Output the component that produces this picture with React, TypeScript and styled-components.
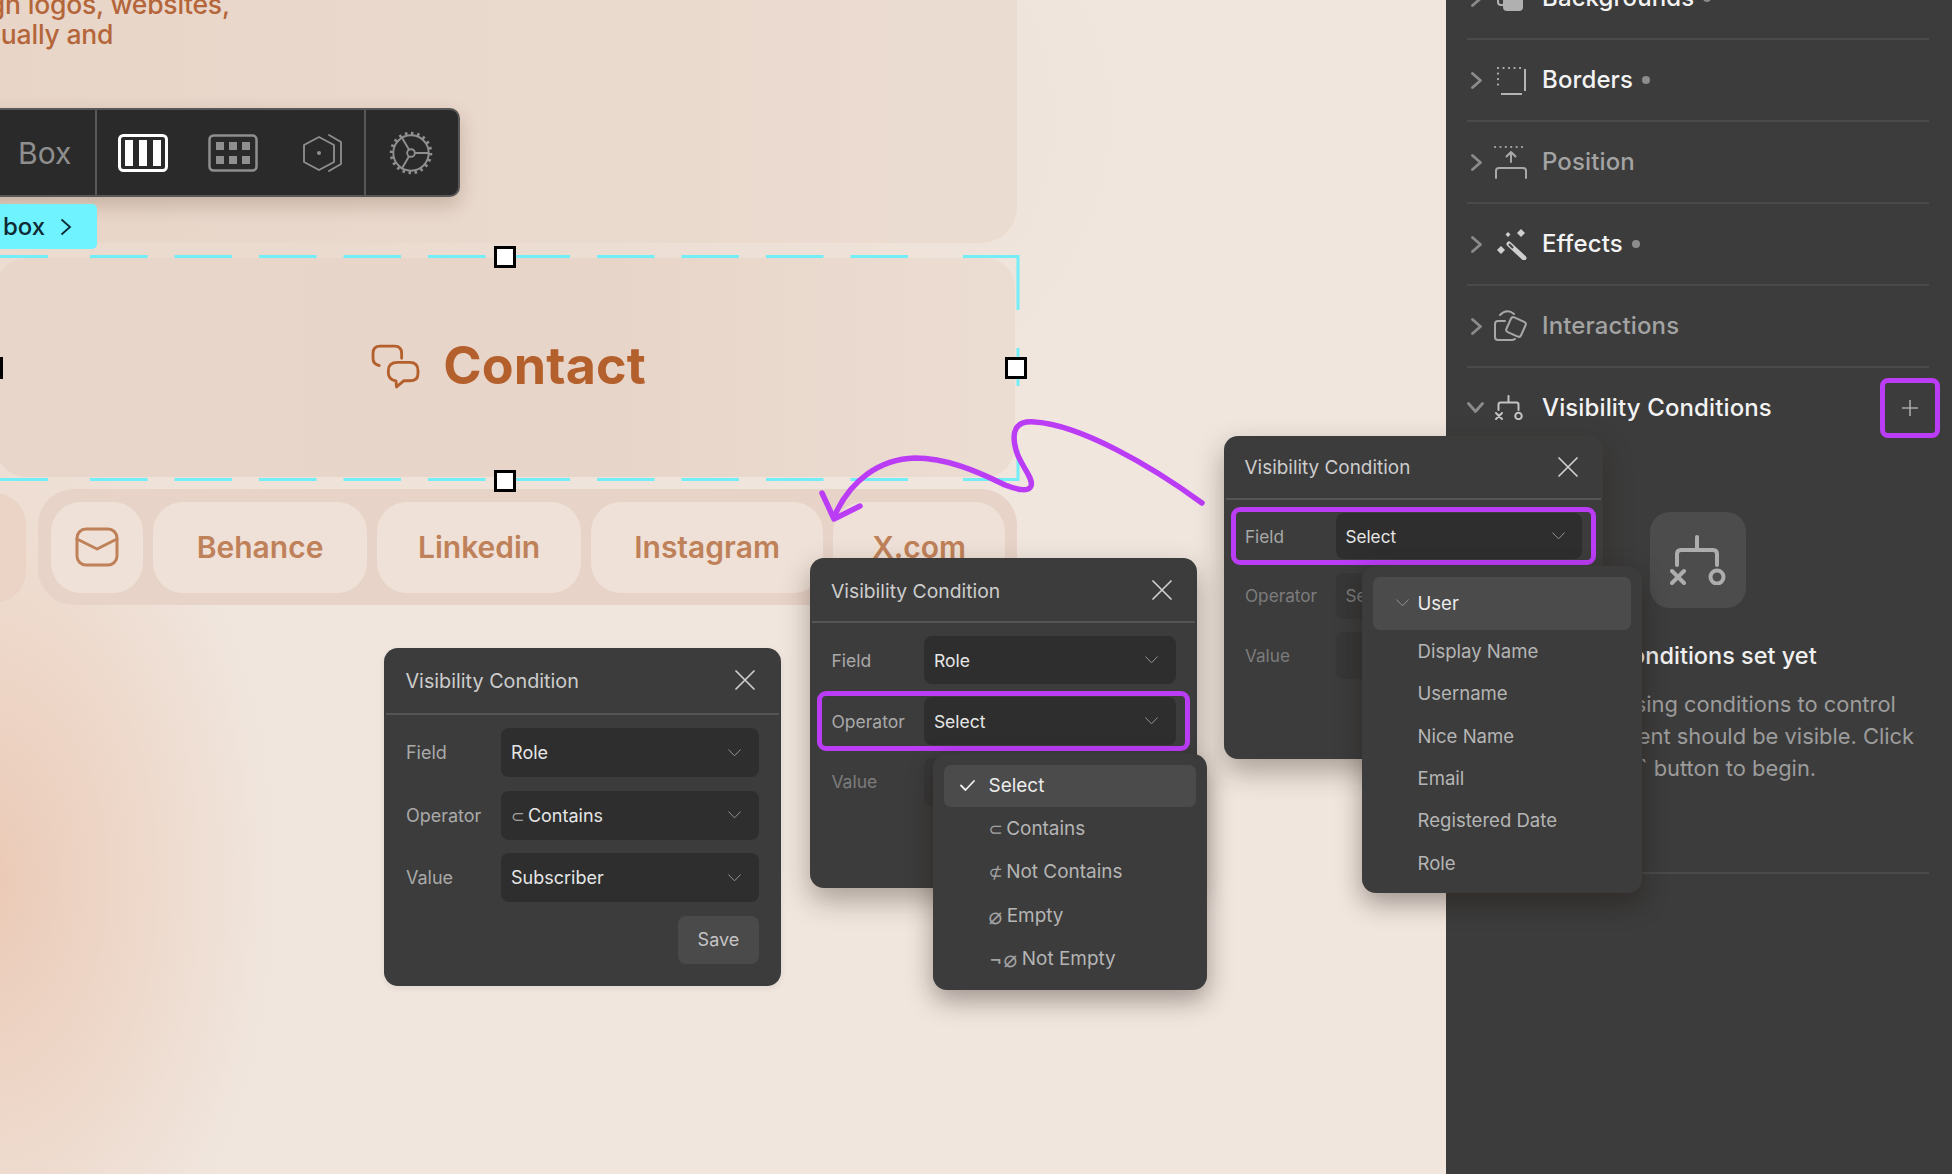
import React from "react";
import styled, { createGlobalStyle } from "styled-components";

const UI_FONT = `"Inter", "DejaVu Sans", sans-serif`;
const PURPLE = "#bb3cf5";
const CYAN = "#74eef6";

const GlobalStyle = createGlobalStyle`
  html, body {
    margin: 0;
    padding: 0;
    background: #f0e5dd;
    font-family: ${UI_FONT};
    overflow: hidden;
  }
`;

const Page = styled.div`
  position: relative;
  display: flex;
  width: 1952px;
  height: 1174px;
  overflow: hidden;
`;

/* canvas */
const Canvas = styled.main`
  flex: 1;
  height: 100%;
  position: relative;
  overflow: hidden;
  background:
    radial-gradient(ellipse 300px 480px at -20px 880px, #ebc9b5 0%, rgba(236, 205, 186, 0) 100%),
    radial-gradient(ellipse 900px 480px at 240px 120px, #e9d6c9 0%, rgba(233, 214, 201, 0) 100%),
    #f0e6de;
`;

const Stage = styled.div`
  display: flex;
  flex-direction: column;
  width: 1021px;
  margin-left: -4px;
`;

const TopCard = styled.section`
  height: 283px;
  margin: -40px 0 0 -40px;
  padding-top: 29px;
  box-sizing: border-box;
  border-radius: 0 0 36px 0;
  background: linear-gradient(90deg, #e8d5c8, #ebdcd1);
`;

const Intro = styled.p`
  margin: 0 0 0 -22px;
  font: 500 26.5px/30px "Inter", sans-serif;
  letter-spacing: -0.2px;
  color: #b4663a;
  white-space: nowrap;
`;

const ContactCard = styled.section`
  display: flex;
  align-items: center;
  justify-content: center;
  gap: 23px;
  height: 219px;
  margin: 15px 2px 0 0;
  padding: 0 0 3px 6px;
  box-sizing: border-box;
  border-radius: 30px;
  background: linear-gradient(90deg, #e9d6ca, #e8d5c9 60%, #ecddd2);
`;

const ContactTitle = styled.h2`
  margin: 0;
  font: 700 52px/1 "Inter", sans-serif;
  letter-spacing: 0.1px;
  color: #b4602d;
`;

const LinkStrip = styled.div`
  display: flex;
  gap: 12px;
  height: 116px;
  margin: 12px 0 0 -76px;
`;

const StripEnd = styled.div`
  width: 106px;
  height: 110px;
  margin-top: 4px;
  border-radius: 32px;
  background: #ebd3c6;
`;

const LinkGroup = styled.nav`
  display: flex;
  flex-shrink: 0;
  gap: 10px;
  width: 979px;
  padding: 13px 12px 12px 13px;
  box-sizing: border-box;
  border-radius: 36px;
  background: #e7d3c7;
`;

const LinkPill = styled.a<{ $w: number }>`
  display: flex;
  align-items: center;
  justify-content: center;
  width: ${(p) => p.$w}px;
  height: 91px;
  padding-bottom: 2px;
  box-sizing: border-box;
  border-radius: 30px;
  background: #efe1d7;
  font: 600 30px/1 "Inter", sans-serif;
  color: #bf8159;
`;

/* builder chrome laid over the canvas */
const Toolbar = styled.div`
  position: absolute;
  left: -20px;
  top: 108px;
  display: flex;
  align-items: stretch;
  height: 89px;
  box-sizing: border-box;
  border: 2px solid #575757;
  border-radius: 10px;
  background: #2a2a2a;
  box-shadow: 0 8px 20px rgba(70, 40, 20, 0.22);
`;

const ToolLabel = styled.div`
  display: flex;
  align-items: center;
  width: 115px;
  padding-left: 36px;
  box-sizing: border-box;
  border-right: 2px solid #575757;
  font: 400 30px/1 ${UI_FONT};
  color: #8f8f8f;
`;

const ToolGroup = styled.div`
  display: flex;
  align-items: center;
  width: 269px;
  padding-left: 21px;
  gap: 40px;
  box-sizing: border-box;
  border-right: 2px solid #575757;
`;

const ToolGear = styled.div`
  display: flex;
  align-items: center;
  padding: 0 25px 0 23px;
`;

const TagCrumb = styled.div`
  position: absolute;
  left: -10px;
  top: 204px;
  display: flex;
  align-items: center;
  gap: 15px;
  width: 107px;
  height: 45px;
  padding-left: 13px;
  box-sizing: border-box;
  border-radius: 5px;
  background: #6ef3ff;
  font: 500 24px/1 ${UI_FONT};
  color: #0f2a33;
`;

const Handle = styled.span<{ $x: number; $y: number }>`
  position: absolute;
  left: ${(p) => p.$x - 11}px;
  top: ${(p) => p.$y - 11}px;
  width: 22px;
  height: 22px;
  box-sizing: border-box;
  border: 3.5px solid #000;
  background: #fff;
`;

const Marquee = styled.svg`
  position: absolute;
  left: 0;
  top: 250px;
  overflow: visible;
`;

const Scribble = styled.svg`
  position: absolute;
  left: 815px;
  top: 415px;
  z-index: 2;
`;

/* settings sidebar */
const Sidebar = styled.aside`
  width: 506px;
  height: 100%;
  padding: 0 23px 0 21px;
  box-sizing: border-box;
  background: #3c3c3c;
`;

const SectionList = styled.div`
  margin-top: -42px;
`;

const SectionRow = styled.div<{ $open?: boolean }>`
  display: flex;
  align-items: center;
  height: ${(p) => (p.$open ? "79px" : "82px")};
  box-sizing: border-box;
  border-bottom: ${(p) => (p.$open ? "none" : "2px solid #4a4a4a")};
`;

const RowChevron = styled.span`
  display: flex;
  align-items: center;
  width: 28px;
  flex-shrink: 0;
`;

const RowIcon = styled.span`
  display: flex;
  align-items: center;
  width: 47px;
  flex-shrink: 0;
`;

const RowLabel = styled.span<{ $dim?: boolean }>`
  font: 500 24px/1 ${UI_FONT};
  letter-spacing: 0.12px;
  color: ${(p) => (p.$dim ? "#a3a3a3" : "#f3f3f3")};
`;

const RowDot = styled.i`
  width: 8px;
  height: 8px;
  margin-left: 9px;
  border-radius: 50%;
  background: #8c8c8c;
`;

const AddButton = styled.button`
  display: flex;
  align-items: center;
  justify-content: center;
  width: 60px;
  height: 60px;
  margin: 0 -11px 0 auto;
  padding: 0;
  box-sizing: border-box;
  border: 5px solid ${PURPLE};
  border-radius: 8px;
  background: transparent;
`;

const EmptyState = styled.div`
  display: flex;
  flex-direction: column;
  align-items: center;
  padding: 65px 0 88px;
  border-bottom: 2px solid #4a4a4a;
  text-align: center;
`;

const EmptyIcon = styled.div`
  display: flex;
  align-items: center;
  justify-content: center;
  width: 96px;
  height: 96px;
  border-radius: 20px;
  background: #4c4c4c;
`;

const EmptyTitle = styled.h3`
  margin: 32px 0 0;
  font: 500 23.5px/32px ${UI_FONT};
  color: #f0f0f0;
`;

const EmptyText = styled.p`
  margin: 16px 0 0;
  font: 400 21.9px/32px ${UI_FONT};
  white-space: nowrap;
  color: #9c9c9c;
`;

/* visibility condition popovers */
const Panel = styled.div<{ $x: number; $y: number; $size: number; $raised?: boolean }>`
  position: absolute;
  left: ${(p) => p.$x}px;
  top: ${(p) => p.$y}px;
  z-index: 3;
  width: 22.05em;
  height: 18.78em;
  box-sizing: border-box;
  border-radius: 14px;
  background: #3c3c3c;
  font-size: ${(p) => p.$size}px;
  box-shadow: ${(p) => (p.$raised ? "0 12px 28px rgba(40, 25, 15, 0.35)" : "0 2px 6px rgba(40, 25, 15, 0.08)")};
`;

const PanelHead = styled.header`
  display: flex;
  align-items: center;
  justify-content: space-between;
  height: 3.72em;
  margin: 0 2px;
  padding: 0 1.33em 0 1.08em;
  box-sizing: border-box;
  border-bottom: 2px solid #555;
`;

const PanelTitle = styled.span`
  margin-top: 2px;
  font-size: 1.1em;
  font-weight: 400;
  color: #cdcdcd;
`;

const PanelBody = styled.div`
  display: flex;
  flex-direction: column;
  gap: 0.77em;
  padding: 0.75em 1.22em 0 1.22em;
`;

const FieldRow = styled.div<{ $focus?: boolean; $dim?: boolean }>`
  position: relative;
  display: flex;
  align-items: center;
  height: 2.7em;
  color: ${(p) => (p.$dim ? "#7c7c7c" : "#a9a9a9")};

  ${(p) =>
    p.$focus &&
    `&::after {
      content: "";
      position: absolute;
      inset: -6px -14px;
      border: 5px solid ${PURPLE};
      border-radius: 9px;
    }`}
`;

const FieldLabel = styled.label`
  width: 5.28em;
  flex-shrink: 0;
`;

const SelectBox = styled.div<{ $dim?: boolean }>`
  display: flex;
  align-items: center;
  justify-content: space-between;
  flex: 1;
  height: 100%;
  padding: 0 1em 0 0.56em;
  box-sizing: border-box;
  border-radius: 8px;
  background: ${(p) => (p.$dim ? "#373737" : "#2e2e2e")};
  color: ${(p) => (p.$dim ? "#7c7c7c" : "#e6e6e6")};
`;

const OpGlyph = styled.span<{ $big?: boolean }>`
  margin-right: 0.2em;
  font-size: ${(p) => (p.$big ? "1.2em" : "0.9em")};
  color: #a2a2a2;
`;

const PanelFooter = styled.div`
  display: flex;
  justify-content: flex-end;
`;

const SaveButton = styled.button`
  width: 4.5em;
  height: 2.67em;
  border: none;
  border-radius: 8px;
  background: #4a4a4a;
  font: inherit;
  color: #c4c4c4;
`;

const Dropdown = styled.ul<{ $left: number; $top: number; $w: number; $h: number }>`
  position: absolute;
  left: ${(p) => p.$left}px;
  top: ${(p) => p.$top}px;
  z-index: 4;
  display: flex;
  flex-direction: column;
  gap: 1px;
  width: ${(p) => p.$w}px;
  height: ${(p) => p.$h}px;
  margin: 0;
  padding: 10.5px 11px;
  box-sizing: border-box;
  list-style: none;
  border-radius: 14px;
  background: #3c3c3c;
  font-size: 1.08em;
  box-shadow: 0 10px 26px rgba(25, 15, 10, 0.38);
`;

const DropItem = styled.li<{ $active?: boolean; $h: number }>`
  display: flex;
  align-items: center;
  flex-shrink: 0;
  height: ${(p) => p.$h}px;
  border-radius: 7px;
  background: ${(p) => (p.$active ? "#4b4b4b" : "transparent")};
  color: ${(p) => (p.$active ? "#ececec" : "#b5b5b5")};
`;

const ItemMark = styled.span<{ $pad: number }>`
  display: flex;
  align-items: center;
  width: 44.5px;
  padding-left: ${(p) => p.$pad}px;
  box-sizing: border-box;
  flex-shrink: 0;
`;

/* icons */
const Stroke = {
  fill: "none",
  stroke: "currentColor",
  strokeLinecap: "round",
  strokeLinejoin: "round",
} as const;

const ThinChevron = ({ size = 13 }: { size?: number }) => (
  <svg width={size} height={size * 0.6} viewBox="0 0 13 8" style={{ color: "#969696" }}>
    <path d="M0.5 0.8 L6.5 7 L12.5 0.8" {...Stroke} strokeWidth={1} />
  </svg>
);

const CloseIcon = () => (
  <svg width="20" height="20" viewBox="0 0 20 20" style={{ color: "#cfcfcf" }}>
    <path d="M1 1 L19 19 M19 1 L1 19" {...Stroke} strokeWidth={1.7} />
  </svg>
);

const CheckIcon = () => (
  <svg width="15" height="11" viewBox="0 0 15 11" style={{ color: "#efefef" }}>
    <path d="M1 5.5 L5.5 10 L14 1" {...Stroke} strokeWidth={1.8} />
  </svg>
);

const RightChevron = () => (
  <svg width="11" height="17" viewBox="0 0 11 17" style={{ color: "#8b8b8b", marginLeft: 4 }}>
    <path d="M1.5 1.5 L9.5 8.5 L1.5 15.5" {...Stroke} strokeWidth={2.8} />
  </svg>
);

const DownChevron = () => (
  <svg width="17" height="11" viewBox="0 0 17 11" style={{ color: "#8b8b8b" }}>
    <path d="M1.5 1.5 L8.5 9.5 L15.5 1.5" {...Stroke} strokeWidth={2.8} />
  </svg>
);

const ConditionsIcon = ({ w, sw, color }: { w: number; sw: number; color: string }) => (
  <svg width={w} height={(w * 50) / 56} viewBox="0 0 56 50" style={{ color }}>
    <path d="M27 2 V15 M7 30 V19 Q7 15 11 15 H43 Q47 15 47 19 V30" {...Stroke} strokeWidth={sw} />
    <path d="M2 36 L14 48 M14 36 L2 48" {...Stroke} strokeWidth={sw} />
    <circle cx="47" cy="42" r="6.5" {...Stroke} strokeWidth={sw} />
  </svg>
);

const BackgroundsIcon = () => (
  <svg width="28" height="28" viewBox="0 0 28 28" style={{ color: "#b0b0b0", marginLeft: 2 }}>
    <rect x="1" y="2" width="20" height="19" rx="3" {...Stroke} strokeWidth={2} />
    <path d="M6 15 H26 V23 Q26 27 22 27 H10 Q6 27 6 23 Z" fill="currentColor" />
  </svg>
);

const BordersIcon = () => (
  <svg width="30" height="30" viewBox="0 0 30 30" style={{ color: "#b4b4b4", marginLeft: 1 }}>
    <path d="M2 3 H26 M2 3 V25" {...Stroke} strokeWidth={2.2} strokeDasharray="0.1 5.4" />
    <path d="M29 4 V26 M5 29 H26" fill="none" stroke="currentColor" strokeWidth={2} />
  </svg>
);

const PositionIcon = () => (
  <svg width="34" height="34" viewBox="0 0 34 34" style={{ color: "#a8a8a8", marginLeft: -1 }}>
    <path d="M1 2 H33" {...Stroke} strokeWidth={2.2} strokeDasharray="0.1 5.3" />
    <path d="M17 17 V7 M12.5 11.5 L17 7 L21.5 11.5" {...Stroke} strokeWidth={2} />
    <path d="M2 33 V26 Q2 23 5 23 H29 Q32 23 32 26 V33" {...Stroke} strokeWidth={2} />
  </svg>
);

const EffectsIcon = () => (
  <svg width="32" height="32" viewBox="0 0 32 32" style={{ color: "#cfcfcf" }}>
    <path d="M14 16 L29 30" {...Stroke} strokeWidth={5} />
    <path d="M14 16 L18 20" stroke="#3c3c3c" strokeWidth={2} fill="none" />
    <path d="M26 1 L30 5 L26 9 L22 5 Z M13 4 L15.5 6.5 L13 9 L10.5 6.5 Z M6 18 L10 22 L6 26 L2 22 Z" fill="currentColor" />
  </svg>
);

const InteractionsIcon = () => (
  <svg width="34" height="34" viewBox="0 0 34 34" style={{ color: "#a8a8a8", marginLeft: -1 }}>
    <path d="M6 6 Q13 -1 20 5" {...Stroke} strokeWidth={2} />
    <path d="M11 12 H4 Q1 12 1 15 V28 Q1 31 4 31 H17 Q20 31 21 30" {...Stroke} strokeWidth={2} />
    <rect x="14" y="10" width="16" height="16" rx="2.5" transform="rotate(24 22 18)" {...Stroke} strokeWidth={2} />
  </svg>
);

const ColumnsIcon = () => (
  <svg width="50" height="38" viewBox="0 0 50 38">
    <rect x="1.5" y="1.5" width="47" height="35" rx="4" fill="none" stroke="#fff" strokeWidth={3} />
    <path d="M7 6 H15 V32 H7 Z M21 6 H29 V32 H21 Z M35 6 H43 V32 H35 Z" fill="#fff" />
  </svg>
);

const GridIcon = () => (
  <svg width="50" height="38" viewBox="0 0 50 38" style={{ color: "#8f8f8f" }}>
    <rect x="1.5" y="1.5" width="47" height="35" rx="4" fill="none" stroke="currentColor" strokeWidth={2.5} />
    <path
      d="M8 8 H16 V16 H8 Z M21 8 H29 V16 H21 Z M34 8 H42 V16 H34 Z M8 22 H16 V30 H8 Z M21 22 H29 V30 H21 Z M34 22 H42 V30 H34 Z"
      fill="currentColor"
    />
  </svg>
);

const HexIcon = () => (
  <svg width="40" height="38" viewBox="0 0 40 38" style={{ color: "#8f8f8f", marginLeft: 5 }}>
    <path d="M16 3 L31 11 V28 L16 36 L1 28 V11 Z" {...Stroke} strokeWidth={1.8} />
    <circle cx="16" cy="19" r="2" fill="currentColor" />
    <path d="M26 1 L38 8 V30 L26 37" {...Stroke} strokeWidth={1.8} />
  </svg>
);

const GearIcon = () => (
  <svg width="44" height="44" viewBox="0 0 46 46" style={{ color: "#8f8f8f" }}>
    <circle cx="23" cy="23" r="18.5" fill="none" stroke="currentColor" strokeWidth={2} />
    <circle cx="23" cy="23" r="20.5" fill="none" stroke="currentColor" strokeWidth={3.5} strokeDasharray="2.6 3.8" />
    <circle cx="23" cy="23" r="4" fill="none" stroke="currentColor" strokeWidth={2} />
    <path d="M27 23 H41 M21 19.5 L13 6 M21 26.5 L13 40" fill="none" stroke="currentColor" strokeWidth={2} />
  </svg>
);

const ChatIcon = () => (
  <svg width="49" height="45" viewBox="0 0 48 44" style={{ color: "#b4602d", flexShrink: 0 }}>
    <path d="M30 14 V9 Q30 2 23 2 H9 Q2 2 2 9 V14 Q2 20 8 21" {...Stroke} strokeWidth={2.8} />
    <path
      d="M26 18 H38 Q46 18 46 26 V29 Q46 36 38 36 H32 L25 42 L24.5 36 Q17 35 17 28 V26 Q17 18 26 18 Z"
      {...Stroke}
      strokeWidth={2.8}
    />
  </svg>
);

const MailIcon = () => (
  <svg width="44" height="40" viewBox="0 0 44 40" style={{ color: "#bf8159" }}>
    <rect x="2" y="2" width="40" height="36" rx="9" {...Stroke} strokeWidth={3} />
    <path d="M2 12 L22 22 L42 12" {...Stroke} strokeWidth={3} />
  </svg>
);

/* data */
const SECTIONS = [
  { label: "Backgrounds", icon: <BackgroundsIcon />, dot: true, dim: false },
  { label: "Borders", icon: <BordersIcon />, dot: true, dim: false },
  { label: "Position", icon: <PositionIcon />, dot: false, dim: true },
  { label: "Effects", icon: <EffectsIcon />, dot: true, dim: false },
  { label: "Interactions", icon: <InteractionsIcon />, dot: false, dim: true },
];

const LINKS = [
  { label: "Behance", w: 215 },
  { label: "Linkedin", w: 204 },
  { label: "Instagram", w: 233 },
  { label: "X.com", w: 172 },
];

const OPERATORS = [
  { glyph: "", label: "Select", big: false },
  { glyph: "⊂", label: "Contains", big: false },
  { glyph: "⊄", label: "Not Contains", big: false },
  { glyph: "⌀", label: "Empty", big: true },
  { glyph: "¬⌀", label: "Not Empty", big: true },
];

const USER_FIELDS = ["Display Name", "Username", "Nice Name", "Email", "Registered Date", "Role"];

type ConditionPanelProps = {
  x: number;
  y: number;
  size: number;
  raised?: boolean;
  children: React.ReactNode;
};

const ConditionPanel = ({ x, y, size, raised, children }: ConditionPanelProps) => (
  <Panel $x={x} $y={y} $size={size} $raised={raised}>
    <PanelHead>
      <PanelTitle>Visibility Condition</PanelTitle>
      <CloseIcon />
    </PanelHead>
    <PanelBody>
      {children}
    </PanelBody>
  </Panel>
);

type FieldProps = {
  label: string;
  focus?: boolean;
  dim?: boolean;
  children?: React.ReactNode;
};

const Field = ({ label, focus, dim, children }: FieldProps) => (
  <FieldRow $focus={focus} $dim={dim}>
    <FieldLabel>{label}</FieldLabel>
    <SelectBox $dim={dim}>
      <span>{children}</span>
      {!dim && <ThinChevron />}
    </SelectBox>
  </FieldRow>
);

const App = () => {
  return (
    <>
      <GlobalStyle />
      <Page>
        <Canvas>
          <Stage>
            <TopCard>
              <Intro>
                Design logos, websites,
                <br />
                to visually and
              </Intro>
            </TopCard>
            <ContactCard>
              <ChatIcon />
              <ContactTitle>Contact</ContactTitle>
            </ContactCard>
            <LinkStrip>
              <StripEnd />
              <LinkGroup>
                <LinkPill $w={92}>
                  <MailIcon />
                </LinkPill>
                {LINKS.map((link) => (
                  <LinkPill key={link.label} $w={link.w}>
                    {link.label}
                  </LinkPill>
                ))}
              </LinkGroup>
            </LinkStrip>
          </Stage>

          <Toolbar>
            <ToolLabel>Box</ToolLabel>
            <ToolGroup>
              <ColumnsIcon />
              <GridIcon />
              <HexIcon />
            </ToolGroup>
            <ToolGear>
              <GearIcon />
            </ToolGear>
          </Toolbar>
          <TagCrumb>
            box
            <svg width="12" height="18" viewBox="0 0 12 18">
              <path d="M1.5 1.5 L10 9 L1.5 16.5" fill="none" stroke="#0f2a33" strokeWidth={1.8} />
            </svg>
          </TagCrumb>

          <Marquee width="1020" height="232" viewBox="0 250 1020 232" fill="none" stroke={CYAN} strokeWidth={3}>
            <path d="M0 256.5 H48 M963 256.5 H1018 V310 M1018 348 V386 M1018 450 V479.5 H963 M0 479.5 H48" />
            <path d="M90 256.5 H910 M90 479.5 H910" strokeDasharray="57.5 27" />
          </Marquee>
          <Handle $x={505} $y={257} />
          <Handle $x={505} $y={481} />
          <Handle $x={1016} $y={368} />
          <Handle $x={-8} $y={368} />
        </Canvas>

        <Sidebar>
          <SectionList>
            {SECTIONS.map((section) => (
              <SectionRow key={section.label}>
                <RowChevron>
                  <RightChevron />
                </RowChevron>
                <RowIcon>{section.icon}</RowIcon>
                <RowLabel $dim={section.dim}>{section.label}</RowLabel>
                {section.dot && <RowDot />}
              </SectionRow>
            ))}
            <SectionRow $open>
              <RowChevron>
                <DownChevron />
              </RowChevron>
              <RowIcon>
                <ConditionsIcon w={28} sw={4} color="#c4c4c4" />
              </RowIcon>
              <RowLabel>Visibility Conditions</RowLabel>
              <AddButton>
                <svg width="16" height="16" viewBox="0 0 16 16">
                  <path d="M8 0 V16 M0 8 H16" stroke="#a8a8a8" strokeWidth={1.6} />
                </svg>
              </AddButton>
            </SectionRow>
            <EmptyState>
              <EmptyIcon>
                <ConditionsIcon w={56} sw={4} color="#adadad" />
              </EmptyIcon>
              <EmptyTitle>No conditions set yet</EmptyTitle>
              <EmptyText>
                Start off by using conditions to control
                <br />
                when this element should be visible. Click
                <br />
                the `+` button to begin.
              </EmptyText>
            </EmptyState>
          </SectionList>
        </Sidebar>

        <Scribble width="400" height="110" viewBox="815 415 400 110" fill="none" stroke={PURPLE} strokeWidth={5.5} strokeLinecap="round" strokeLinejoin="round">
          <path d="M1202 503 C1150 465 1080 425 1035 422 C1015 420 1011 432 1016 450 C1020 465 1034 478 1031 486 C1029 492 1018 490 1005 485 C975 470 945 458 915 458 C880 459 850 480 834 517" />
          <path d="M822 493 L834 519 L860 506" />
        </Scribble>

        <ConditionPanel x={384} y={648} size={18}>
          <Field label="Field">Role</Field>
          <Field label="Operator">
            <OpGlyph>⊂</OpGlyph>Contains
          </Field>
          <Field label="Value">Subscriber</Field>
          <PanelFooter>
            <SaveButton>Save</SaveButton>
          </PanelFooter>
        </ConditionPanel>

        <ConditionPanel x={810} y={558} size={17.55} raised>
          <Field label="Field">Role</Field>
          <Field label="Operator" focus>
            Select
          </Field>
          <Field label="Value" dim />
          <Dropdown $left={123} $top={196} $w={274} $h={236}>
            {OPERATORS.map((op, i) => (
              <DropItem key={op.label} $h={42.2} $active={i === 0}>
                <ItemMark $pad={16}>{i === 0 && <CheckIcon />}</ItemMark>
                {op.glyph && <OpGlyph $big={op.big}>{op.glyph}</OpGlyph>}
                {op.label}
              </DropItem>
            ))}
          </Dropdown>
        </ConditionPanel>

        <ConditionPanel x={1224} y={436} size={17.2} raised>
          <Field label="Field" focus>
            Select
          </Field>
          <Field label="Operator" dim>
            Select
          </Field>
          <Field label="Value" dim />
          <Dropdown $left={138} $top={130} $w={280} $h={327}>
            <DropItem $h={53} $active>
              <ItemMark $pad={23}>
                <ThinChevron />
              </ItemMark>
              User
            </DropItem>
            {USER_FIELDS.map((name) => (
              <DropItem key={name} $h={41.3}>
                <ItemMark $pad={0} />
                {name}
              </DropItem>
            ))}
          </Dropdown>
        </ConditionPanel>
      </Page>
    </>
  );
};

export default App;
